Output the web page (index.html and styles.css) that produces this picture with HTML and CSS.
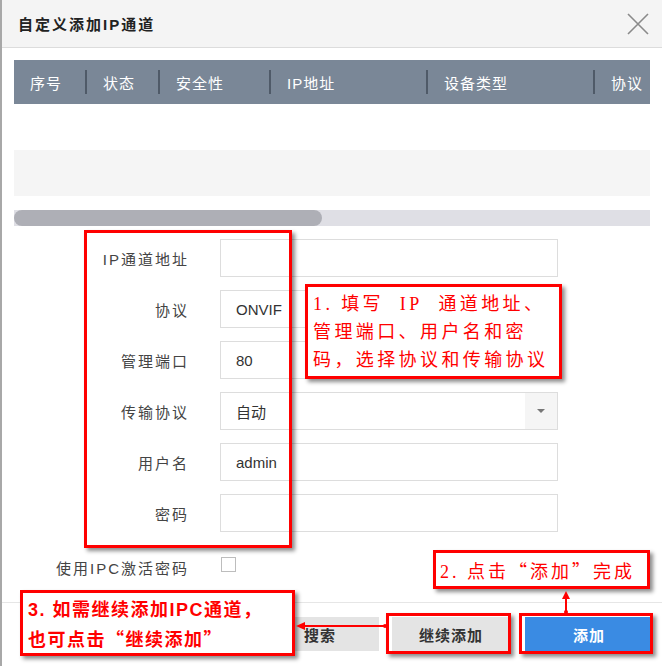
FILE: index.html
```html
<!DOCTYPE html>
<html>

<head>
    <title>自定义添加IP通道</title>
    <link rel="stylesheet" href="styles.css">
</head>

<body>
    <div class="dialog">
        <div class="dialogHeader">
            <span class="dialogTitle">自定义添加IP通道</span>
            <svg class="closeIcon" width="22" height="22" viewBox="0 0 22 22">
                <path d="M1 1 L21 21 M21 1 L1 21" stroke="#8a8a8a" stroke-width="1.6" fill="none" />
            </svg>
        </div>

        <div class="dialogBody">
            <div class="tableHead">
                <div class="headCell" style="width: 73px">序号</div>
                <div class="headCell" style="width: 73px">状态</div>
                <div class="headCell" style="width: 111px">安全性</div>
                <div class="headCell" style="width: 157px">IP地址</div>
                <div class="headCell" style="width: 167px">设备类型</div>
                <div class="headCell lastCell">协议</div>
            </div>
            <div class="tableRow"></div>
            <div class="tableRow greyRow"></div>
            <div class="scrollTrack">
                <div class="scrollThumb"></div>
            </div>

            <div class="formArea">
                <label class="formLabel">IP通道地址</label>
                <div class="formInput"></div>

                <label class="formLabel">协议</label>
                <div class="formInput">ONVIF</div>

                <label class="formLabel">管理端口</label>
                <div class="formInput">80</div>

                <label class="formLabel">传输协议</label>
                <div class="formInput selectInput">
                    <span>自动</span>
                    <span class="selectArrow"></span>
                </div>

                <label class="formLabel">用户名</label>
                <div class="formInput">admin</div>

                <label class="formLabel">密码</label>
                <div class="formInput"></div>
            </div>

            <div class="checkRow">
                <label class="formLabel">使用IPC激活密码</label>
                <span class="checkBox"></span>
            </div>
        </div>

        <div class="dialogFooter">
            <button class="footButton">搜索</button>
            <button class="footButton">继续添加</button>
            <button class="footButton primaryButton">添加</button>
        </div>

        <!-- annotations drawn over the dialog -->
        <div class="markFrame frameForm"></div>
        <div class="markFrame frameContinue"></div>
        <div class="markFrame frameAdd"></div>

        <div class="noteBox noteOne">1. 填写&nbsp;&nbsp;IP&nbsp;&nbsp;通道地址、<br>管理端口、用户名和密<br>码，选择协议和传输协议</div>
        <div class="noteBox noteTwo">2. 点击<span class="wideQuote">“</span>添加<span class="wideQuote">”</span>完成</div>
        <div class="noteBox noteThree">3. 如需继续添加IPC通道，<br>也可点击<span class="wideQuote">“</span>继续添加<span class="wideQuote">”</span></div>

        <svg class="arrowLayer" width="662" height="666" viewBox="0 0 662 666">
            <path d="M299 626 L386 626" stroke="#f00" stroke-width="2" fill="none" />
            <path d="M296 626 L305 622 L305 630 Z" fill="#f00" />
            <circle cx="385" cy="626" r="2" fill="#f00" />
            <path d="M566 595 L566 612" stroke="#f00" stroke-width="2" fill="none" />
            <path d="M566 591 L562 599 L570 599 Z" fill="#f00" />
            <circle cx="566" cy="612" r="2" fill="#f00" />
        </svg>
    </div>
</body>

</html>
```

FILE: styles.css
```css
body {
    margin: 0;
    background-color: #fff;
    font-family: "Liberation Sans", "Noto Sans CJK SC", sans-serif;
    color: #333;
}
.dialog {
    position: relative;
    width: 660px;
    height: 666px;
    border-left: 2px solid #a8a8a8;
    overflow: hidden;
}
.dialogHeader {
    display: flex;
    align-items: center;
    justify-content: space-between;
    height: 47px;
    padding: 0 13px 0 16px;
    background-color: #f4f4f4;
    border-bottom: 1px solid #dcdcdc;
}
.dialogTitle {
    font-size: 15px;
    font-weight: 600;
    color: #222;
    letter-spacing: 2px;
}
.closeIcon {
    display: block;
}
.dialogBody {
    padding: 12px 12px 0 12px;
}
.tableHead {
    display: flex;
    height: 44px;
    background-color: #7a8797;
    overflow: hidden;
    white-space: nowrap;
}
.headCell {
    flex: none;
    display: flex;
    align-items: center;
    padding-left: 16px;
    box-sizing: border-box;
    font-size: 15px;
    letter-spacing: 1px;
    color: #fff;
    border-right: 2px solid #4f5a68;
    margin: 10px 0;
    height: 24px;
}
.lastCell {
    border-right: none;
    width: 80px;
}
.tableRow {
    height: 46px;
}
.greyRow {
    background-color: #f5f5f5;
}
.scrollTrack {
    height: 16px;
    margin-top: 14px;
    background-color: #dfdfe5;
}
.scrollThumb {
    width: 308px;
    height: 16px;
    border-radius: 8px;
    background-color: #aeafb6;
}
.formArea {
    display: grid;
    grid-template-columns: 173px 338px;
    column-gap: 33px;
    row-gap: 13px;
    margin-top: 13px;
}
.formLabel {
    display: flex;
    align-items: center;
    justify-content: flex-end;
    font-size: 15px;
    letter-spacing: 2px;
    margin-right: -2px;
    color: #444;
}
.formInput {
    display: flex;
    align-items: center;
    height: 38px;
    box-sizing: border-box;
    padding-left: 15px;
    border: 1px solid #dddddd;
    font-size: 15px;
    color: #333;
}
.selectInput {
    justify-content: space-between;
    padding-right: 0;
}
.selectArrow {
    width: 32px;
    height: 36px;
    background-color: #f5f5f5;
    position: relative;
}
.selectArrow::after {
    content: "";
    position: absolute;
    left: 12px;
    top: 16px;
    border-left: 4px solid transparent;
    border-right: 4px solid transparent;
    border-top: 4px solid #777;
}
.checkRow {
    display: grid;
    grid-template-columns: 173px 15px;
    column-gap: 34px;
    margin-top: 25px;
    height: 15px;
}
.checkBox {
    width: 15px;
    height: 15px;
    box-sizing: border-box;
    border: 1px solid #bdbdbd;
    background-color: #fff;
}
.dialogFooter {
    display: flex;
    justify-content: flex-end;
    gap: 13px;
    margin-top: 30px;
    padding: 14px 9px 0 0;
    border-top: 1px solid #e6e6e6;
}
.footButton {
    width: 118px;
    height: 34px;
    border: none;
    background-color: #e4e4e4;
    font-family: "Liberation Serif", "Noto Sans CJK SC", serif;
    font-size: 15px;
    font-weight: bold;
    letter-spacing: 1px;
    color: #333;
}
.primaryButton {
    width: 128px;
    margin-left: 2px;
    background-color: #3a8be3;
    color: #fff;
}
.markFrame {
    position: absolute;
    border: 3px solid #f00;
    box-shadow: 3px 3px 4px rgba(0, 0, 0, 0.45);
}
.frameForm {
    left: 82px;
    top: 230px;
    width: 202px;
    height: 312px;
}
.frameContinue {
    left: 384px;
    top: 613px;
    width: 119px;
    height: 35px;
}
.frameAdd {
    left: 517px;
    top: 613px;
    width: 128px;
    height: 35px;
}
.noteBox {
    position: absolute;
    box-sizing: border-box;
    background-color: #fff;
    border: 3px solid #f00;
    box-shadow: 3px 3px 4px rgba(0, 0, 0, 0.45);
    color: #f00;
    font-family: "Liberation Serif", "Noto Sans CJK SC", serif;
    font-size: 18px;
    white-space: nowrap;
}
.wideQuote {
    font-family: "Noto Sans CJK SC", sans-serif;
}
.noteOne {
    left: 303px;
    top: 284px;
    width: 257px;
    height: 95px;
    padding: 3px 0 0 5px;
    line-height: 28px;
    letter-spacing: 3.4px;
}
.noteTwo {
    left: 431px;
    top: 550px;
    width: 217px;
    height: 39px;
    padding: 4px 0 0 4px;
    line-height: 26px;
    letter-spacing: 3px;
}
.noteThree {
    left: 18px;
    top: 590px;
    width: 275px;
    height: 66px;
    padding: 3px 0 0 5px;
    line-height: 28px;
    font-family: "Liberation Sans", "Noto Sans CJK SC", sans-serif;
    font-weight: bold;
    letter-spacing: 1.5px;
}
.arrowLayer {
    position: absolute;
    left: -2px;
    top: 0;
    pointer-events: none;
}
```
